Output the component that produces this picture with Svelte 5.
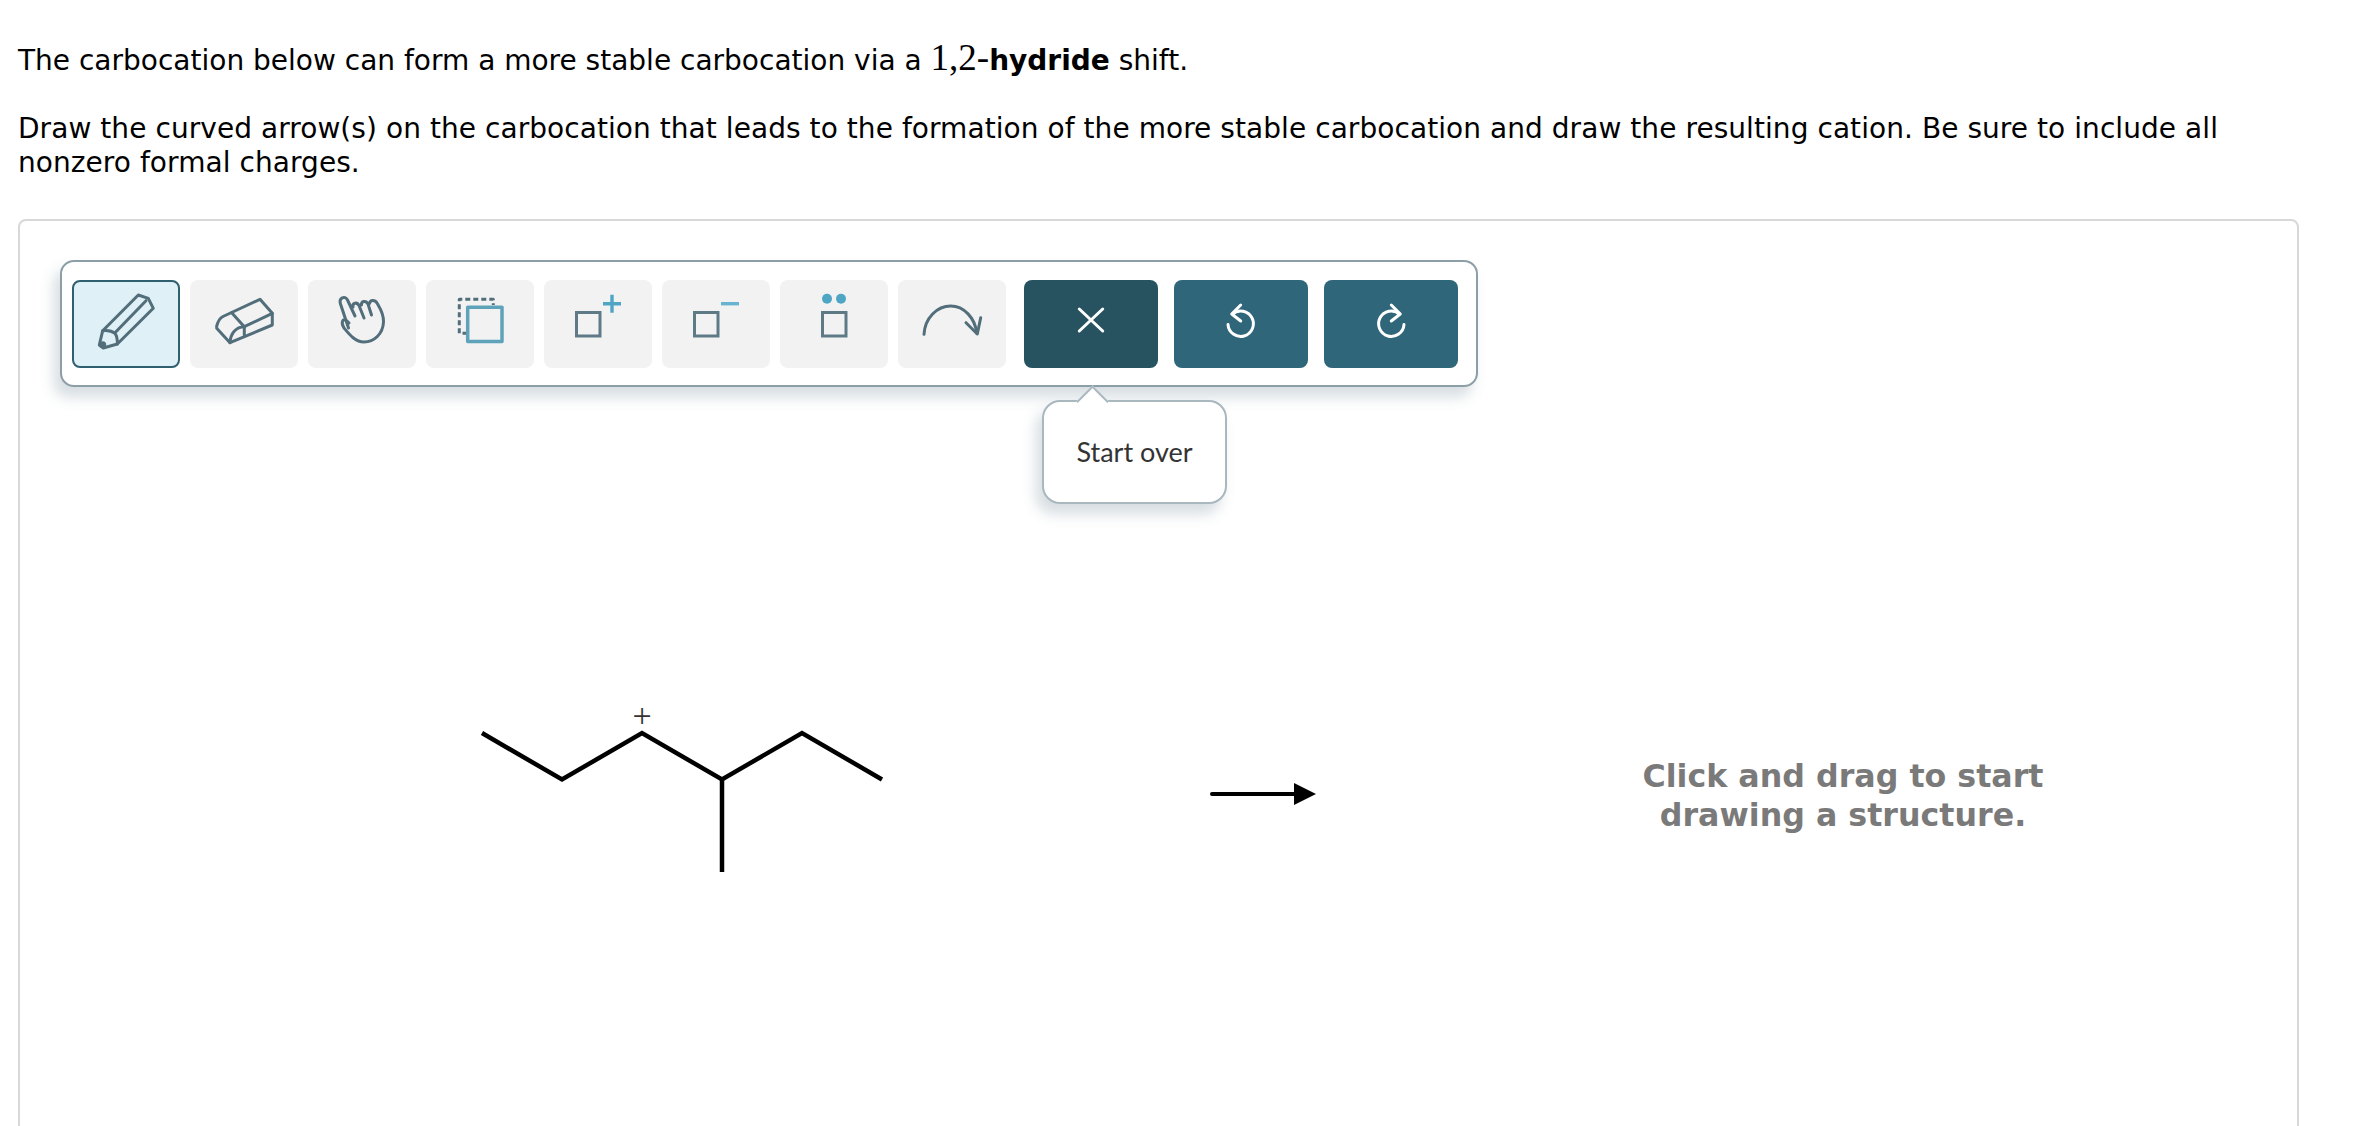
<script>
	const chain = '462,512 542,558.5 622,512 702,558.5 782,512 862,558.5';
</script>

<div class="page">
	<p class="line">The carbocation below can form a more stable carbocation via a <span class="num">1,2-</span><b>hydride</b> shift.</p>
	<p class="line long">Draw the curved arrow(s) on the carbocation that leads to the formation of the more stable carbocation and draw the resulting cation. Be sure to include all nonzero formal charges.</p>

	<div class="panel">
		<div class="toolbar">
			<button class="tool selected" aria-label="Draw">
				<svg viewBox="0 0 104 84">
					<g transform="translate(-2 -2)">
						<path d="M30.7 50.7 66.3 15 76.3 18.3 81.3 28.3 45.3 64" />
						<path d="M43 52.7 74 20.7" />
						<path d="M30.7 50.7C36 50 40 51 43 53.3 45 56 45.500 60 45.300 64L31.300 68 27.300 65Z" />
						<circle class="fill" cx="30.7" cy="64.700" r="3.500" />
					</g>
				</svg>
			</button>
			<button class="tool" aria-label="Erase">
				<svg viewBox="0 0 108 88">
					<path d="M26.700 46C28 41 30 38 33 36.500L70 19.300 82.300 33.300V45L40 62.700 26.700 48.300Z" />
					<path d="M41.700 32.700 54.300 46.700V55" />
					<path d="M54.300 46.700 82.300 33.300" />
					<path d="M54.300 46.700C46 47 40.500 53 40 62.700" />
				</svg>
			</button>
			<button class="tool" aria-label="Move">
				<svg viewBox="0 0 108 88">
					<path d="M40.500 48 32.500 24C30.500 18 37 15 39.500 20L47 36M45 27C44 23 49 21.500 51 25.500L56 38M53.500 25C53 21 58 20 60 24L63.500 35M61.500 23.500C62 19.500 67 19.500 69 23 72 28 76 34 75.500 42 75 54 66 62 56 62 47 62 41 54 36 48 33 43 34 39 38 40L41 43" />
				</svg>
			</button>
			<button class="tool" aria-label="Select">
				<svg viewBox="0 0 108 88">
					<path class="dots" d="M33.300 53.300V19.300H67.300V25M36.500 53.300H40" />
					<rect class="accent" x="41.700" y="27.300" width="34.300" height="34.300" />
				</svg>
			</button>
			<button class="tool" aria-label="Add charge">
				<svg viewBox="0 0 108 88">
					<rect class="atom" x="32.500" y="32.500" width="23.500" height="23.500" />
					<path class="sign" d="M59 23.700H77M68 14.700V32.700" />
				</svg>
			</button>
			<button class="tool" aria-label="Subtract charge">
				<svg viewBox="0 0 108 88">
					<rect class="atom" x="32.500" y="32.500" width="23.500" height="23.500" />
					<path class="sign light" d="M59 23.700H77" />
				</svg>
			</button>
			<button class="tool" aria-label="Lone pair">
				<svg viewBox="0 0 108 88">
					<rect class="atom" x="42.500" y="32.500" width="23.500" height="23.500" />
					<circle class="dot" cx="47" cy="18.700" r="5" />
					<circle class="dot" cx="61" cy="18.700" r="5" />
				</svg>
			</button>
			<button class="tool" aria-label="Curved arrow">
				<svg viewBox="0 0 108 88">
					<path d="M26 54.300C27 38 39 26 52.700 26 66 26 77 38 78.700 53" />
					<path d="M82.700 37.700 79.300 54 68 42.700" />
				</svg>
			</button>

			<div class="actions">
				<button class="action dark" aria-label="Start over">
					<svg viewBox="0 0 134 88"><path d="M55.300 29 78.700 51M78.700 29 55.300 51" /></svg>
				</button>
				<button class="action" aria-label="Undo">
					<svg viewBox="0 0 134 88"><path d="M58.500 34A12.700 12.700 0 1 1 54 44.500M66.700 25 57.700 34 66.700 41" /></svg>
				</button>
				<button class="action" aria-label="Redo">
					<svg viewBox="0 0 134 88"><path d="M75.500 34A12.700 12.700 0 1 0 80 44.500M67.300 25 76.300 34 67.300 41" /></svg>
				</button>
			</div>
		</div>

		<div class="tooltip">Start over</div>

		<svg class="sketch" width="2277" height="900">
			<polyline points={chain} />
			<line x1="702" y1="558.500" x2="702" y2="651" />
			<text x="622" y="506" text-anchor="middle">+</text>
			<line class="reaction" x1="1192" y1="573" x2="1276" y2="573" />
			<polygon points="1274,562 1296,573 1274,584" />
		</svg>

		<div class="prompt">Click and drag to start<br />drawing a structure.</div>
	</div>
</div>

<style>
	:global(body) {
		margin: 0;
		background: #fff;
		overflow: hidden;
	}
	.page {
		height: 1126px;
		overflow: hidden;
		box-sizing: border-box;
		padding: 44px 59px 0 18px;
		font-family: "DejaVu Sans", Verdana, sans-serif;
		font-size: 28px;
		line-height: 34px;
		color: #000;
	}
	.line {
		margin: 0 0 34px;
	}
	.long {
		letter-spacing: 0.06px;
	}
	.num {
		font-family: "Liberation Serif", serif;
		font-size: 37px;
		line-height: 0;
	}
	.panel {
		position: relative;
		margin-top: 39px;
		height: 1000px;
		padding: 39px 40px;
		box-sizing: border-box;
		border: 2px solid #d6d8da;
		border-radius: 8px;
	}
	.toolbar {
		display: inline-flex;
		gap: 10px;
		padding: 18px 18px 17px 10px;
		background: #fff;
		border: 2px solid #8c9ea8;
		border-radius: 14px;
		box-shadow: -6px 10px 14px rgba(70, 100, 120, 0.22);
	}
	button {
		display: block;
		height: 88px;
		padding: 0;
		border: 0;
		border-radius: 8px;
	}
	svg {
		display: block;
	}
	.tool {
		width: 108px;
		background: #f2f2f3;
	}
	.tool svg {
		width: 108px;
		height: 88px;
		fill: none;
		stroke: #526e7a;
		stroke-width: 3;
		stroke-linecap: round;
		stroke-linejoin: round;
	}
	.tool.selected {
		box-sizing: border-box;
		background: #dff0f6;
		border: 2px solid #2f6070;
	}
	.tool.selected svg {
		width: 104px;
		height: 84px;
	}
	.tool .fill {
		fill: #526e7a;
		stroke: none;
	}
	.tool .dots {
		stroke-dasharray: 5 3;
		stroke-linecap: butt;
	}
	.tool .accent {
		stroke: #5ea3ba;
		stroke-width: 3.5;
	}
	.tool .atom {
		stroke: #5f7a87;
		stroke-linejoin: miter;
	}
	.tool .sign {
		stroke: #4fa6c4;
		stroke-width: 3.4;
		stroke-linecap: butt;
	}
	.tool .sign.light {
		stroke: #66b4cf;
	}
	.tool .dot {
		fill: #4fa6c4;
		stroke: none;
	}
	.actions {
		display: flex;
		gap: 16px;
		margin-left: 8px;
	}
	.action {
		width: 134px;
		background: #2f6679;
	}
	.action.dark {
		background: #26535f;
	}
	.action svg {
		width: 134px;
		height: 88px;
		fill: none;
		stroke: #fff;
		stroke-width: 3;
		stroke-linecap: round;
		stroke-linejoin: round;
	}
	.tooltip {
		position: absolute;
		left: 1022px;
		top: 179px;
		box-sizing: border-box;
		width: 185px;
		height: 104px;
		display: flex;
		align-items: center;
		justify-content: center;
		background: #fff;
		border: 2px solid #a9b7bf;
		border-radius: 18px;
		box-shadow: -6px 10px 14px rgba(70, 100, 120, 0.22);
		font-family: Lato, "Open Sans", sans-serif;
		font-size: 27px;
		color: #333;
	}
	.tooltip::before {
		content: "";
		position: absolute;
		left: 37px;
		top: -12px;
		width: 21px;
		height: 21px;
		background: #fff;
		border: solid #a9b7bf;
		border-width: 2px 0 0 2px;
		transform: rotate(45deg);
	}
	.sketch {
		position: absolute;
		left: 0;
		top: 0;
		fill: none;
		stroke: #000;
		stroke-width: 4.5;
		pointer-events: none;
	}
	.sketch text {
		fill: #333;
		stroke: none;
		font-family: "Liberation Serif", serif;
		font-size: 34px;
	}
	.sketch .reaction {
		stroke-width: 4;
		stroke-linecap: round;
	}
	.sketch polygon {
		fill: #000;
		stroke: none;
	}
	.prompt {
		position: absolute;
		left: 1583px;
		top: 536px;
		width: 480px;
		text-align: center;
		font-weight: 700;
		font-size: 31.7px;
		line-height: 39px;
		color: #7a7a7a;
	}
</style>
